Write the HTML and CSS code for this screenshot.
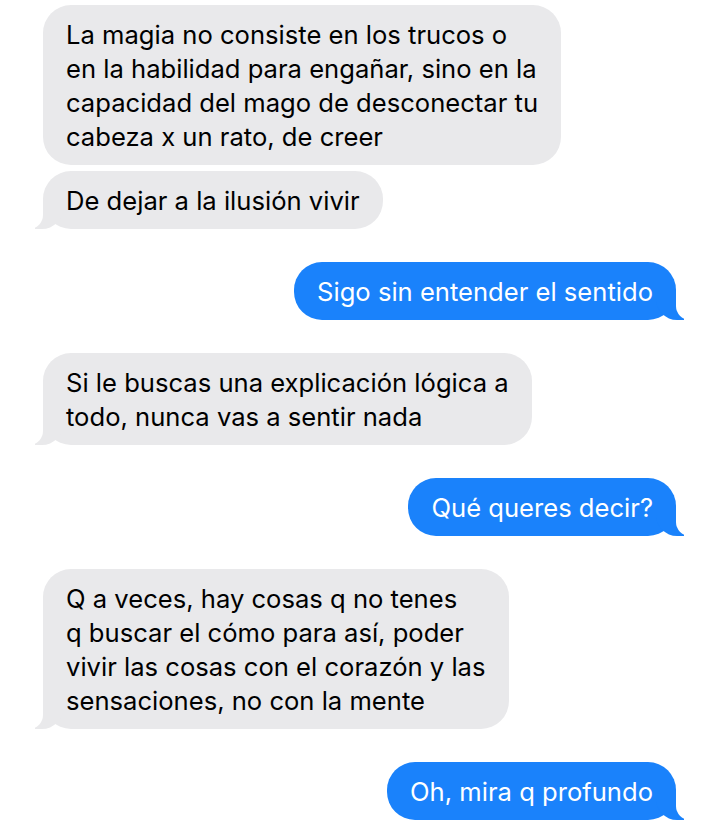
FILE: index.html
```html
<!DOCTYPE html>
<html lang="es">
<head>
  <meta charset="UTF-8">
  <meta name="viewport" content="width=device-width, initial-scale=1.0">
  <title>Mensajes</title>
  <link rel="stylesheet" href="styles.css">
</head>
<body>
  <main class="chat">
    <div class="msg them">La magia no consiste en los trucos o<br>en la habilidad para engañar, sino en la<br>capacidad del mago de desconectar tu<br>cabeza x un rato, de creer</div>
    <div class="msg them tail">De dejar a la ilusión vivir</div>

    <div class="msg me tail group">Sigo sin entender el sentido</div>

    <div class="msg them tail group">Si le buscas una explicación lógica a<br>todo, nunca vas a sentir nada</div>

    <div class="msg me tail group">Qué queres decir?</div>

    <div class="msg them tail group">Q a veces, hay cosas q no tenes<br>q buscar el cómo para así, poder<br>vivir las cosas con el corazón y las<br>sensaciones, no con la mente</div>

    <div class="msg me tail group">Oh, mira q profundo</div>
  </main>
</body>
</html>
```

FILE: styles.css
```css
/* Page */
body {
  margin: 0;
  background: #fff;
  font-family: 'Inter', 'Roboto', sans-serif;
  color: #000;
}
.chat {
  display: flex;
  flex-direction: column;
  padding: 5px 44px 0 43px;
}

/* Bubbles */
.msg {
  position: relative;
  align-self: flex-start;
  white-space: nowrap;
  padding: 13px 23px 11px;
  border-radius: 28px;
  font-size: 25.6px;
  line-height: 34px;
  letter-spacing: 0;
  margin-top: 6px;
}
.msg:first-child {
  margin-top: 0;
}
.msg.group {
  margin-top: 33px;
}
.them {
  background: #e9e9eb;
  color: #000;
}
.me {
  align-self: flex-end;
  background: #1a82fb;
  color: #fff;
}

/* Tails */
.tail::before,
.tail::after {
  content: "";
  position: absolute;
  bottom: 0;
  height: 28px;
}
.them.tail::before {
  left: -8px;
  width: 28px;
  background: #e9e9eb;
  border-bottom-right-radius: 21px;
}
.them.tail::after {
  left: -36px;
  width: 36px;
  background: #fff;
  border-bottom-right-radius: 14px;
}
.me.tail::before {
  right: -8px;
  width: 28px;
  background: #1a82fb;
  border-bottom-left-radius: 21px;
}
.me.tail::after {
  right: -36px;
  width: 36px;
  background: #fff;
  border-bottom-left-radius: 14px;
}
```
